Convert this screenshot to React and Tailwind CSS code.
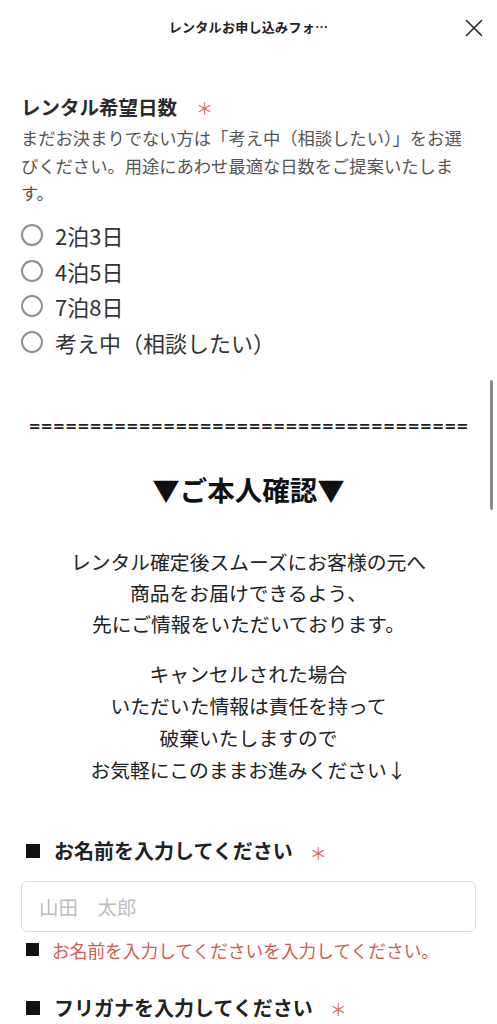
import { X } from 'lucide-react'

const jp = "font-['Noto_Sans_CJK_JP','Noto_Sans',sans-serif]"

const options = ['2泊3日', '4泊5日', '7泊8日', '考え中（相談したい）']

function Radio({ label }) {
  return (
    <label className="flex items-center h-[35.5px] gap-[12px] cursor-pointer">
      <span className="w-[22px] h-[22px] rounded-full border-[2px] border-[#8e8e8e] bg-white shrink-0"></span>
      <span className="text-[22px] leading-none text-[#333]">{label}</span>
    </label>
  )
}

function FieldLabel({ children, className = '' }) {
  return (
    <div className={`flex items-center leading-[28px] ${className}`}>
      <span className="w-[14px] h-[14px] bg-[#111] ml-[5px] mr-[14px] shrink-0"></span>
      <span className="text-[20px] font-bold text-[#222]">{children}</span>
      <span className="text-[17px] text-[#e26a60] ml-[17px] mt-[3px]">＊</span>
    </div>
  )
}

export default function App() {
  return (
    <div className={`${jp} relative w-full min-h-[1024px] bg-white text-[#333] overflow-hidden`}>
      {/* header */}
      <div className="relative h-[54px] flex items-center justify-center">
        <span className="text-[13px] font-bold text-[#222] tracking-[0.3px]">レンタルお申し込みフォ…</span>
        <button className="absolute right-[8px] top-[13px] text-[#222]">
          <X size={30} strokeWidth={1.2} />
        </button>
      </div>

      <div className="px-[21px]">
        {/* rental days */}
        <div className="mt-[37px] flex items-center leading-[28px]">
          <span className="text-[19.5px] font-bold text-[#2a2a2a]">レンタル希望日数</span>
          <span className="text-[17px] text-[#e26a60] ml-[19px] mt-[3px]">＊</span>
        </div>
        <p className="mt-[2px] text-[17.3px] leading-[27.5px] text-[#555] whitespace-nowrap">
          まだお決まりでない方は「考え中（相談したい）」をお選
          <br />
          びください。用途にあわせ最適な日数をご提案いたしま
          <br />
          す。
        </p>

        <div className="mt-[11px] flex flex-col">
          {options.map((o) => (
            <Radio key={o} label={o} />
          ))}
        </div>

        {/* divider */}
        <div className="mt-[52px] leading-[28px] text-center font-['DejaVu_Sans',sans-serif] font-bold text-[14.6px] text-[#222] whitespace-nowrap">
          ====================================
        </div>

        <h2 className="mt-[31px] leading-[36px] text-center text-[27.5px] font-bold text-[#111]">▼ご本人確認▼</h2>

        <p className="mt-[39px] text-center text-[19.8px] leading-[31px] text-[#222]">
          レンタル確定後スムーズにお客様の元へ
          <br />
          商品をお届けできるよう、
          <br />
          先にご情報をいただいております。
        </p>
        <p className="mt-[19.5px] text-center text-[19.8px] leading-[32px] text-[#222]">
          キャンセルされた場合
          <br />
          いただいた情報は責任を持って
          <br />
          破棄いたしますので
          <br />
          お気軽にこのままお進みください↓
        </p>

        {/* name */}
        <FieldLabel className="mt-[49.5px]">お名前を入力してください</FieldLabel>
        <input
          type="text"
          placeholder="山田　太郎"
          className="mt-[14.5px] w-full h-[51px] px-[17px] rounded-[6px] border border-[#dedede] bg-white text-[19.5px] text-[#333] placeholder:text-[#bdbdbd] outline-none"
        />
        <div className="mt-[5.5px] flex items-center leading-[24px]">
          <span className="w-[13px] h-[13px] bg-[#111] ml-[5px] mr-[13px] shrink-0"></span>
          <span className="text-[17.7px] text-[#d65a50]">お名前を入力してくださいを入力してください。</span>
        </div>

        {/* furigana */}
        <FieldLabel className="mt-[30.5px]">フリガナを入力してください</FieldLabel>
      </div>

      {/* scroll indicator */}
      <div className="absolute right-[4px] top-[380px] w-[3px] h-[130px] rounded-full bg-[#8a8a8a]"></div>
    </div>
  )
}
